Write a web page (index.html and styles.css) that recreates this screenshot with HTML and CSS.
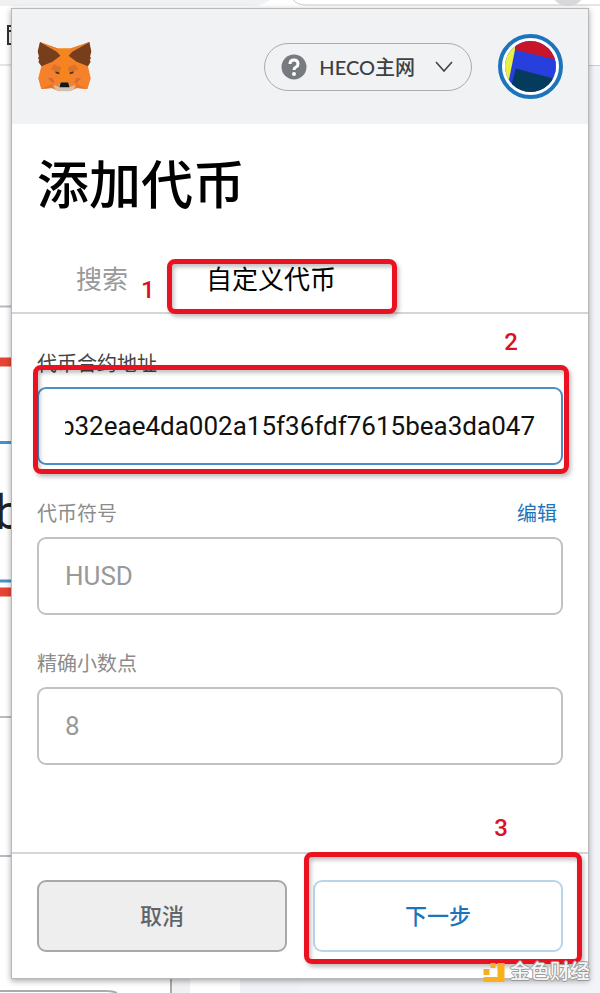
FILE: index.html
```html
<!DOCTYPE html>
<html lang="zh-CN">
<head>
<meta charset="utf-8">
<meta name="viewport" content="width=device-width, initial-scale=1">
<title>添加代币</title>
<link rel="stylesheet" href="styles.css">
</head>
<body>
<div class="backdrop" aria-hidden="true">
  <svg class="backdrop-left" width="300" height="993" viewBox="0 0 300 993">
    <path d="M0 0H270Q262 6 250 6H0Z" fill="#f0f1f3"/>
    <path d="M12 26H8V44H12M8 31H12" fill="none" stroke="#333" stroke-width="2"/>
    <path d="M0 65H12" stroke="#ccc" stroke-width="1"/>
    <path d="M0 306.500H12M0 717H12M0 856H12" stroke="#b9bac4" stroke-width="2"/>
    <path d="M0 362H12M0 592H12" stroke="#e54534" stroke-width="9"/>
    <path d="M0 442.500H12M0 581H12" stroke="#4a90c8" stroke-width="3"/>
    <text x="-5" y="529" class="backdrop-letter">b</text>
    <path d="M0 991H106Q113 991 117 993" fill="none" stroke="#aaa" stroke-width="2"/>
    <path d="M171 978V993" stroke="#aaa" stroke-width="2"/>
    <path d="M172 978H190V993H172Z" fill="#f1f1f3"/>
    <path d="M240 978H300V993H240Z" fill="#f1f2f7"/>
  </svg>
  <div class="backdrop-right"></div>
  <div class="backdrop-bottom"></div>
  <svg class="backdrop-top" width="310" height="10" viewBox="290 0 310 10">
    <path d="M292 -2Q296 5 306 5H600" fill="none" stroke="#ccc" stroke-width="1"/>
    <circle cx="568" cy="-12" r="18" fill="#d8d8da"/>
  </svg>
</div>

<main class="popup">
  <header class="header">
    <svg class="fox" viewBox="114 123 164 152" role="img" aria-label="MetaMask">
      <path d="M123 126L175 145H214L270 126L275 158L266 199L274 233L264 266L234 263L212 272H178L156 263L127 266L118 233L127 198L117 158Z" fill="#f5822a"/>
      <path d="M123 126L175 156L184 167L160 185L127 198L118 185L121 179L117 175L120 168L116 154Z" fill="#763e1a"/>
      <path d="M270 126L217 156L208 167L232 185L266 198L274 185L271 179L275 175L272 168L276 154Z" fill="#763e1a"/>
      <path d="M123 126L177 145L184 166L172 154ZM270 126L214 145L208 166L220 154Z" fill="#e8802c"/>
      <path d="M165 192L187 202L181 217L154 208ZM227 192L205 202L211 217L238 208Z" fill="#dd722a"/>
      <path d="M118 233H160L163 253L127 266ZM274 233H232L229 253L264 266Z" fill="#f5822a"/>
      <path d="M146 233L160 233L167 246L160 248ZM246 233L232 233L225 246L232 248Z" fill="#d96a32"/>
      <path d="M127 266L163 248L160 263ZM264 266L229 248L232 263Z" fill="#e5752c"/>
      <path d="M164 254L180 260L184 246H208L212 260L228 254L224 267L210 273H182L168 267Z" fill="#cdc2b8"/>
      <path d="M185 246H207L211 261H181Z" fill="#161616"/>
      <path d="M168 213L182 218L180 222L170 219ZM224 213L210 218L212 222L222 219Z" fill="#283646"/>
      <path d="M184 166L188 198L181 221L186 246H206L211 221L204 198L208 166L214 145H177Z" fill="#f6851b"/>
    </svg>
    <div class="header-actions">
      <button class="network" type="button">
        <svg class="network-mark" viewBox="0 0 26 26" aria-hidden="true">
          <circle cx="13" cy="13" r="12.500" fill="#777b7f"/>
          <path d="M9 10Q9 6 13 6T17 10Q17 12 15 13T13 16" fill="none" stroke="#fff" stroke-width="3"/>
          <circle cx="13" cy="20" r="2" fill="#fff"/>
        </svg>
        <span>HECO主网</span>
        <svg class="chevron" viewBox="0 0 18 12" aria-hidden="true"><path d="M1 1L9 10L17 1" fill="none" stroke="#444" stroke-width="1.600"/></svg>
      </button>
      <button class="account" type="button" aria-label="账户">
        <svg viewBox="0 0 52 52" aria-hidden="true">
          <defs><clipPath id="disc"><circle cx="26" cy="26" r="26"/></clipPath></defs>
          <g clip-path="url(#disc)">
            <rect width="52" height="52" fill="#263fdd"/>
            <path d="M0 0H12L3 45L0 45Z" fill="#e8f043"/>
            <path d="M11 0H52V19L10 9Z" fill="#c81529"/>
            <path d="M11 28L52 39V52H5Z" fill="#053b5d"/>
            <path d="M51 20H52V34H51Z" fill="#c8157a"/>
          </g>
        </svg>
      </button>
    </div>
  </header>

  <h1 class="title">添加代币</h1>
  <nav class="tabs">
    <button class="tab" type="button">搜索</button>
    <span class="callout-number number-tab">1</span>
    <button class="tab tab-active" type="button">自定义代币<span class="callout callout-tab"></span></button>
  </nav>

  <form class="form">
    <div class="field">
      <div class="label-row"><label class="label-active" for="address">代币合约地址</label></div>
      <input class="input input-active" id="address" type="text" dir="rtl" value="b32eae4da002a15f36fdf7615bea3da047">
      <span class="callout callout-address"></span>
      <span class="callout-number number-address">2</span>
    </div>
    <div class="field">
      <div class="label-row"><label for="symbol">代币符号</label><a class="edit" href="#symbol">编辑</a></div>
      <input class="input" id="symbol" type="text" value="HUSD">
    </div>
    <div class="field">
      <div class="label-row"><label for="decimals">精确小数点</label></div>
      <input class="input" id="decimals" type="text" value="8">
    </div>
  </form>

  <footer class="footer">
    <button class="button button-cancel" type="button">取消</button>
    <button class="button button-next" type="button">下一步</button>
    <span class="callout callout-next"></span>
    <span class="callout-number number-next">3</span>
  </footer>
</main>

<div class="watermark">
  <svg viewBox="0 0 22 22" aria-hidden="true">
    <path d="M15 2H22V21H1V16H15Z" fill="#f8b01c"/>
    <path d="M1 8H7V14H1ZM8 2H13V7H8Z" fill="#f5ad25"/>
  </svg>
  <span>金色财经</span>
</div>
</body>
</html>
```
FILE: styles.css
```css
* {
  box-sizing: border-box;
}

body {
  position: relative;
  display: flex;
  min-height: 100vh;
  margin: 0;
  padding: 8px 11px 14px;
  background: #fff;
  font-family: Roboto, "Noto Sans CJK SC", sans-serif;
}

button,
input {
  margin: 0;
  font: inherit;
}

button {
  cursor: pointer;
}

.backdrop {
  position: absolute;
  inset: 0;
  overflow: hidden;
}

.backdrop-left {
  position: absolute;
  top: 0;
  left: 0;
}

.backdrop-letter {
  font-size: 48px;
  fill: #222;
}

.backdrop-right {
  position: absolute;
  top: 65px;
  right: 0;
  bottom: 0;
  width: 12px;
  border-top: 1px solid #ccc;
  background: #f3f4f9;
}

.backdrop-bottom {
  position: absolute;
  right: 0;
  bottom: 0;
  left: 50%;
  height: 15px;
  background: #f3f4f9;
}

.backdrop-top {
  position: absolute;
  top: 0;
  right: 0;
}

.popup {
  position: relative;
  display: flex;
  flex: 1;
  flex-direction: column;
  min-width: 0;
  border: 1px solid #b8b8b8;
  background: #fff;
  box-shadow: 0 2px 6px rgba(0, 0, 0, 0.35);
}

.header {
  display: flex;
  align-items: center;
  justify-content: space-between;
  height: 115px;
  padding: 0 25px;
  background: #f1f2f4;
}

.fox {
  width: 55px;
  height: 51px;
}

.header-actions {
  display: flex;
  align-items: center;
  gap: 26px;
}

.network {
  display: flex;
  align-items: center;
  height: 48px;
  padding: 0 18px 0 16px;
  border: 1px solid #aaadb0;
  border-radius: 24px;
  background: none;
  color: #3c4043;
  font-family: Lato, "Noto Sans CJK SC", sans-serif;
  font-size: 20px;
  font-weight: 500;
  line-height: 24px;
}

.network-mark {
  width: 26px;
  height: 26px;
  margin-right: 12px;
}

.chevron {
  width: 18px;
  height: 12px;
  margin-left: 20px;
}

.account {
  display: flex;
  width: 65px;
  height: 65px;
  padding: 3px;
  border: 4px solid #1c75bc;
  border-radius: 50%;
  background: #fff;
}

.account svg {
  width: 100%;
  height: 100%;
}

.title {
  margin: 32px 25px 44px;
  color: #000;
  font-size: 52px;
  font-weight: 500;
  line-height: 62px;
}

.tabs {
  position: relative;
  display: flex;
  gap: 48px;
  padding-left: 49px;
  border-bottom: 2px solid #d4d5d7;
}

.tab {
  position: relative;
  padding: 0 15px 11px;
  border: 0;
  border-bottom: 3px solid transparent;
  background: none;
  color: #999;
  font-size: 26px;
  line-height: 36px;
}

.tab-active {
  border-color: #1c75bc;
  color: #000;
}

.form {
  display: flex;
  flex: 1;
  flex-direction: column;
  gap: 36px;
  padding: 38px 25px;
}

.field {
  position: relative;
  display: flex;
  flex-direction: column;
  gap: 11px;
}

.field + .field {
  padding-top: 1px;
}

.label-row {
  display: flex;
  justify-content: space-between;
  padding-right: 6px;
  color: #8c8c8c;
  font-size: 20px;
  line-height: 24px;
}

.label-active {
  color: #444;
}

.edit {
  color: #1c75bc;
  text-decoration: none;
}

.input {
  width: 100%;
  height: 78px;
  padding: 0 26px;
  border: 2px solid #c0c2c4;
  border-radius: 9px;
  outline: 0;
  background: #fff;
  color: #999;
  font-size: 26px;
}

.input-active {
  border-color: #4a90c8;
  color: #111;
}

.footer {
  position: relative;
  display: flex;
  gap: 26px;
  padding: 26px 25px;
  border-top: 2px solid #d4d5d7;
}

.button {
  flex: 1;
  height: 72px;
  padding: 0 0 4px;
  border: 2px solid #a8a8a8;
  border-radius: 9px;
  font-size: 22px;
  font-weight: 500;
}

.button-cancel {
  background: #eee;
  color: #5f646a;
}

.button-next {
  border-color: #b8d5ea;
  background: #fff;
  color: #1c75bc;
}

.callout {
  position: absolute;
  border: 5px solid #ea1120;
  border-radius: 8px;
  box-shadow: 2px 3px 4px rgba(0, 0, 0, 0.25), inset 2px 3px 4px rgba(0, 0, 0, 0.25);
  pointer-events: none;
}

.callout-tab {
  inset: -3px -46px -5px -24px;
}

.callout-address {
  inset: 13px -6px -9px -4px;
}

.callout-next {
  inset: -2px 6px 14px 292px;
}

.callout-number {
  position: absolute;
  color: #dc1023;
  font-size: 24px;
  font-weight: 500;
  line-height: 28px;
}

.number-tab {
  bottom: 8px;
  left: 129px;
}

.number-address {
  top: -24px;
  right: 45px;
}

.number-next {
  top: -40px;
  right: 80px;
}

.watermark {
  position: absolute;
  right: 10px;
  bottom: 8px;
  display: flex;
  align-items: center;
  gap: 5px;
  color: #f4f4f4;
  font-size: 20px;
  font-weight: 500;
  line-height: 26px;
  text-shadow: 1px 0 0 #999, -1px 0 0 #999, 0 1px 0 #999, 0 -1px 0 #999;
}

.watermark svg {
  width: 23px;
  height: 22px;
}
```
